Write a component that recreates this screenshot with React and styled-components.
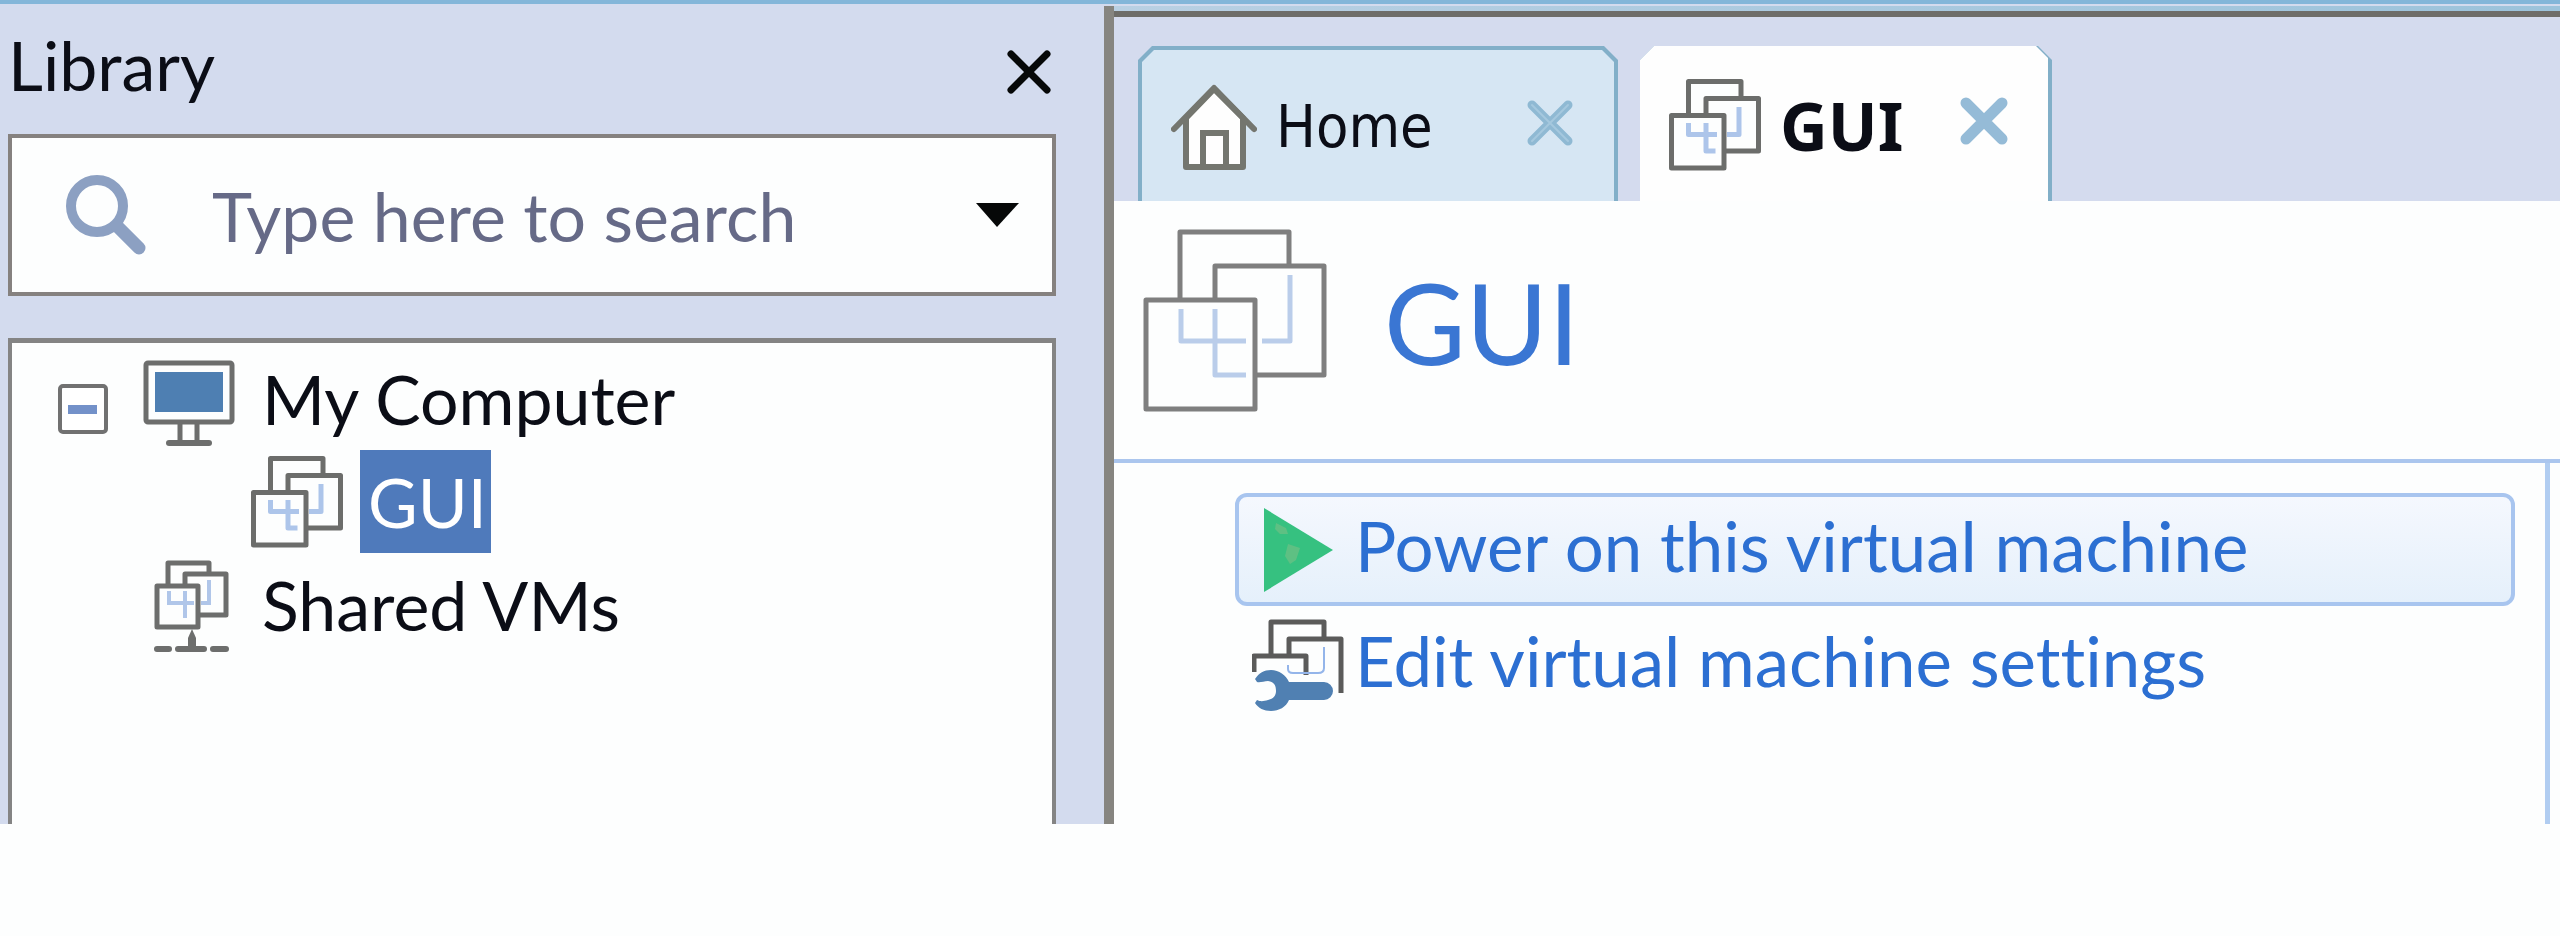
import React, { useState } from "react";
import styled, { createGlobalStyle } from "styled-components";

//css
const GlobalStyle = createGlobalStyle`
  * {
    box-sizing: border-box;
  }
  body {
    margin: 0;
    background-color: #fdfefe;
    font-family: Lato, "Open Sans", sans-serif;
    font-variant-ligatures: none;
    color: #0b0d16;
  }
  button {
    padding: 0;
    border: none;
    background: none;
    font: inherit;
    font-variant-ligatures: none;
    color: inherit;
    cursor: pointer;
  }
  svg {
    display: block;
    flex: none;
  }
`;

const Window = styled.div`
  display: grid;
  grid-template-columns: minmax(0, 69fr) minmax(0, 91fr);
  min-height: 88vh;
  border-top: 4px solid #83b6d9;
  background-color: #d3dbee;
`;

const Sidebar = styled.aside`
  display: flex;
  flex-direction: column;
  padding: 0 48px 0 8px;
`;

const SidebarHeader = styled.div`
  display: flex;
  justify-content: space-between;
  height: 130px;
  padding-right: 3px;
`;

const SidebarTitle = styled.h2`
  margin: 0;
  font-size: 68px;
  font-weight: 400;
  line-height: 122px;
`;

const SidebarClose = styled.button`
  padding-top: 12px;
`;

const SearchBox = styled.div`
  display: flex;
  align-items: center;
  height: 162px;
  padding: 0 33px 0 54px;
  border: 4px solid #85817f;
  background-color: #fdfefe;
`;

const SearchInput = styled.input`
  flex: 1;
  min-width: 0;
  margin-left: 66px;
  padding: 0;
  border: none;
  outline: none;
  background: none;
  font: inherit;
  font-size: 68px;
  color: #666a87;
  &::placeholder {
    color: #666a87;
    opacity: 1;
  }
`;

const TreePanel = styled.div`
  flex: 1;
  margin-top: 42px;
  padding-top: 4px;
  border: 4px solid #848484;
  border-top-width: 5px;
  border-bottom: none;
  background-color: #fdfefe;
`;

const TreeList = styled.ul`
  margin: 0;
  padding: 0;
  list-style: none;
`;

const TreeRow = styled.div`
  display: flex;
  align-items: center;
  height: 103px;
  padding-left: ${(props) => props.$indent}px;
  font-size: 68px;
  line-height: 103px;
  white-space: nowrap;
`;

const TreeToggle = styled.button`
  margin-right: 35px;
`;

const TreeLabel = styled.span`
  margin-left: 27px;
`;

const SelectedLabel = styled.span`
  margin-left: 17px;
  padding: 0 4px 0 8px;
  background-color: #4f7abb;
  color: #fff;
`;

const Main = styled.main`
  display: flex;
  flex-direction: column;
  margin-top: 2px;
  border-left: 10px solid #868580;
  background-color: #fdfefe;
`;

const Strip = styled.div`
  height: 5px;
  background: linear-gradient(to right, #b9d0e3, #9cc3db);
`;

const TabBar = styled.div`
  display: flex;
  gap: 22px;
  padding: 29px 24px 0;
  border-top: 6px solid #6e6d69;
  background-color: #d4dbee;
`;

const Tab = styled.div`
  width: ${(props) => (props.$active ? 412 : 480)}px;
  padding: ${(props) => (props.$active ? "0 4px 0 0" : "4px 4px 0")};
  background-color: #82afc8;
  clip-path: polygon(0 14px, 14px 0, calc(100% - 14px) 0, 100% 14px, 100% 100%, 0 100%);
`;

const TabFace = styled.div`
  display: flex;
  align-items: center;
  height: ${(props) => (props.$active ? 155 : 151)}px;
  padding: 0 40px 0 29px;
  background-color: ${(props) => (props.$active ? "#fefefe" : "#d6e6f3")};
  clip-path: polygon(0 12px, 12px 0, calc(100% - 12px) 0, 100% 12px, 100% 100%, 0 100%);
`;

const TabName = styled.button`
  display: flex;
  flex: 1;
  align-items: center;
  gap: 19px;
  padding-top: 2px;
  font-family: ${(props) =>
    props.$active ? '"Noto Sans", sans-serif' : '"DejaVu Sans Condensed", "DejaVu Sans", sans-serif'};
  font-size: ${(props) => (props.$active ? 66 : 59)}px;
  font-weight: ${(props) => (props.$active ? 700 : 400)};
  line-height: 80px;
`;

const MachineHeader = styled.header`
  display: flex;
  align-items: center;
  gap: 57px;
  height: 262px;
  padding: 0 29px 18px;
  border-bottom: 4px solid #abc6ee;
`;

const MachineName = styled.h1`
  margin: 0;
  font-size: 112px;
  font-weight: 400;
  color: #3a76d3;
`;

const MachineBody = styled.div`
  flex: 1;
  margin-right: 10px;
  padding: 30px 30px 0 121px;
  border-right: 5px solid #b1cdf1;
`;

const ActionButton = styled.button`
  display: flex;
  align-items: center;
  width: 100%;
  height: 113px;
  margin-bottom: 2px;
  padding: 0 13px;
  border: 4px solid ${(props) => (props.$hot ? "#a8c5ef" : "transparent")};
  border-radius: 12px;
  background: ${(props) => (props.$hot ? "linear-gradient(#f5f8fe, #e5f0fb)" : "none")};
  text-align: left;
`;

const ActionLabel = styled.span`
  margin-left: 11px;
  padding-bottom: 8px;
  font-size: 69px;
  color: #2c6fd2;
  white-space: nowrap;
`;

//icons
const CloseIcon = ({ color, width, highlight }) => (
  <svg width="48" height="54" viewBox="0 0 48 54" fill="none" stroke={color} strokeLinecap="round">
    <path d="M6 6 L42 42 M42 6 L6 42" strokeWidth={width} />
    {highlight && <path d="M6 6 L42 42 M42 6 L6 42" stroke={highlight} strokeWidth="2" />}
  </svg>
);

const SearchIcon = () => (
  <svg width="80" height="80" viewBox="0 0 80 80" fill="none" stroke="#8ca0c2">
    <circle cx="31" cy="31" r="26" strokeWidth="10" />
    <path d="M51 51 L73 73" strokeWidth="13" strokeLinecap="round" />
  </svg>
);

const ArrowIcon = () => (
  <svg width="43" height="24" viewBox="0 0 43 24">
    <path d="M0 0 H43 L21 24 Z" fill="#060808" />
  </svg>
);

const MinusIcon = () => (
  <svg width="50" height="70" viewBox="0 0 50 70">
    <rect x="2" y="22" width="46" height="46" rx="3" fill="#fff" stroke="#717171" strokeWidth="4" />
    <rect x="10" y="41" width="29" height="9" fill="#7391c9" />
  </svg>
);

const MonitorIcon = () => (
  <svg width="92" height="96" viewBox="0 0 92 96" fill="none" stroke="#6d6e6d" strokeWidth="5">
    <rect x="3" y="12" width="86" height="59" rx="2" />
    <rect x="12" y="21" width="68" height="40" fill="#4e7fb2" stroke="none" />
    <path d="M37 72 V92 M54 72 V92" />
    <path d="M26 92 H66" strokeWidth="6" strokeLinecap="round" />
  </svg>
);

const SMALL_MARKS = "M39 88 V111 H96 M74 88 V144 H93 M140 56 V111 H116";
const LARGE_MARKS = "M38 80 V112 H103 M72 80 V146 H103 M147 46 V112 H119";

const MachineIcon = ({ size, large }) => (
  <svg
    width={size}
    height={size}
    viewBox="0 0 184 184"
    fill="#fdfefe"
    stroke={large ? "#7f7f7f" : "#6c6d6b"}
    strokeWidth={large ? 5 : 10}
    strokeLinejoin="round"
  >
    <rect x={large ? 37 : 39} y={large ? 3 : 5} width={large ? 109 : 105} height={large ? 109 : 105} />
    <rect x={large ? 72 : 74} y={large ? 37 : 39} width={large ? 109 : 105} height={large ? 109 : 105} />
    <rect x={large ? 3 : 5} y={large ? 71 : 73} width={large ? 109 : 105} height={large ? 109 : 105} />
    <path d={large ? LARGE_MARKS : SMALL_MARKS} fill="none" stroke={large ? "#bacdea" : "#adc5ea"} />
  </svg>
);

const SharedIcon = () => (
  <svg width="92" height="98" viewBox="-11 -4 92 98" fill="#fdfefe" stroke="#6d6e6d" strokeWidth="5">
    <g strokeLinejoin="round">
      <rect x="14" y="3" width="41" height="41" />
      <rect x="31" y="14" width="41" height="41" />
      <rect x="3" y="26" width="41" height="41" />
    </g>
    <path d="M15 31 V43 H40 M31 31 V58 M55 20 V43 H47" fill="none" stroke="#b0c6e9" strokeWidth="4" />
    <path d="M38 69 L42 78 V86 H34 V78 Z" fill="#6d6e6d" stroke="none" />
    <path d="M3 89 H15 M24 89 H50 M59 89 H72" strokeWidth="6" strokeLinecap="round" />
  </svg>
);

const HomeIcon = () => (
  <svg width="86" height="86" viewBox="0 0 86 86" fill="none" stroke="#74766f" strokeWidth="6">
    <path d="M15 34 L43 5 L72 34 V83 H15 Z" fill="#fefefe" strokeLinejoin="round" />
    <path d="M32 83 V49 H55 V83" />
    <path d="M3 45 L43 4 L83 45" strokeLinecap="round" strokeLinejoin="round" />
  </svg>
);

const PlayIcon = () => (
  <svg width="92" height="84" viewBox="0 0 92 84">
    <path d="M12 0 L81 42 L12 84 Z" fill="#36c180" />
    <path d="M24 15 l10 5 2 6 -8 0 -5 -5 Z M36 36 l12 4 -4 12 -6 4 -5 -8 Z" fill="#6fbf85" opacity="0.7" />
  </svg>
);

const SettingsIcon = () => (
  <svg width="92" height="92" viewBox="0 0 92 92" fill="none" stroke="#5b5b5a" strokeWidth="5" strokeLinejoin="round">
    <path d="M19 35 V3 H72 V18" />
    <path d="M37 35 V20 H89 V74" />
    <path d="M2 53 V37 H54 V56" />
    <path d="M36 46 V50 Q36 54 41 54 H66 Q72 54 72 49 V28" stroke="#94b5ea" strokeWidth="2" />
    <path
      d="M3 60 C7 54 12 51 19 51 C27 51 34 56 37 63 H72 a9 9 0 0 1 0 18 H37 C34 88 27 92 19 92 C12 92 6 89 3 84 L5 81 C9 83 12 82 16 81 C22 80 24 76 24 72 C24 66 22 63 16 62 C12 62 8 64 5 63 Z"
      fill="#5080b2"
      stroke="none"
    />
  </svg>
);

const App = () => {
  const [query, setQuery] = useState("");
  const [expanded, setExpanded] = useState(true);

  return (
    <>
      <GlobalStyle />
      <Window>
        <Sidebar>
          <SidebarHeader>
            <SidebarTitle>Library</SidebarTitle>
            <SidebarClose type="button" aria-label="Close library">
              <CloseIcon color="#060808" width="7" />
            </SidebarClose>
          </SidebarHeader>
          <SearchBox>
            <SearchIcon />
            <SearchInput
              type="text"
              aria-label="Type here to search"
              placeholder="Type here to search"
              value={query}
              onChange={(e) => setQuery(e.target.value)}
            />
            <button type="button" aria-label="Search options">
              <ArrowIcon />
            </button>
          </SearchBox>
          <TreePanel>
            <TreeList>
              <li>
                <TreeRow $indent={46}>
                  <TreeToggle
                    type="button"
                    aria-label="Toggle My Computer"
                    aria-expanded={expanded}
                    onClick={() => setExpanded(!expanded)}
                  >
                    <MinusIcon />
                  </TreeToggle>
                  <MonitorIcon />
                  <TreeLabel>My Computer</TreeLabel>
                </TreeRow>
                {expanded && (
                  <TreeList>
                    <li>
                      <TreeRow $indent={239}>
                        <MachineIcon size={92} />
                        <SelectedLabel>GUI</SelectedLabel>
                      </TreeRow>
                    </li>
                  </TreeList>
                )}
              </li>
              <li>
                <TreeRow $indent={131}>
                  <SharedIcon />
                  <TreeLabel>Shared VMs</TreeLabel>
                </TreeRow>
              </li>
            </TreeList>
          </TreePanel>
        </Sidebar>
        <Main>
          <Strip />
          <TabBar>
            <Tab>
              <TabFace>
                <TabName type="button">
                  <HomeIcon />
                  Home
                </TabName>
                <button type="button" aria-label="Close Home">
                  <CloseIcon color="#8fb9d3" width="9" highlight="#a5c8de" />
                </button>
              </TabFace>
            </Tab>
            <Tab $active>
              <TabFace $active>
                <TabName type="button" $active>
                  <MachineIcon size={92} />
                  GUI
                </TabName>
                <button type="button" aria-label="Close GUI">
                  <CloseIcon color="#95bbd7" width="11" />
                </button>
              </TabFace>
            </Tab>
          </TabBar>
          <MachineHeader>
            <MachineIcon size={184} large />
            <MachineName>GUI</MachineName>
          </MachineHeader>
          <MachineBody>
            <ActionButton type="button" $hot>
              <PlayIcon />
              <ActionLabel>Power on this virtual machine</ActionLabel>
            </ActionButton>
            <ActionButton type="button">
              <SettingsIcon />
              <ActionLabel>Edit virtual machine settings</ActionLabel>
            </ActionButton>
          </MachineBody>
        </Main>
      </Window>
    </>
  );
};

export default App;
